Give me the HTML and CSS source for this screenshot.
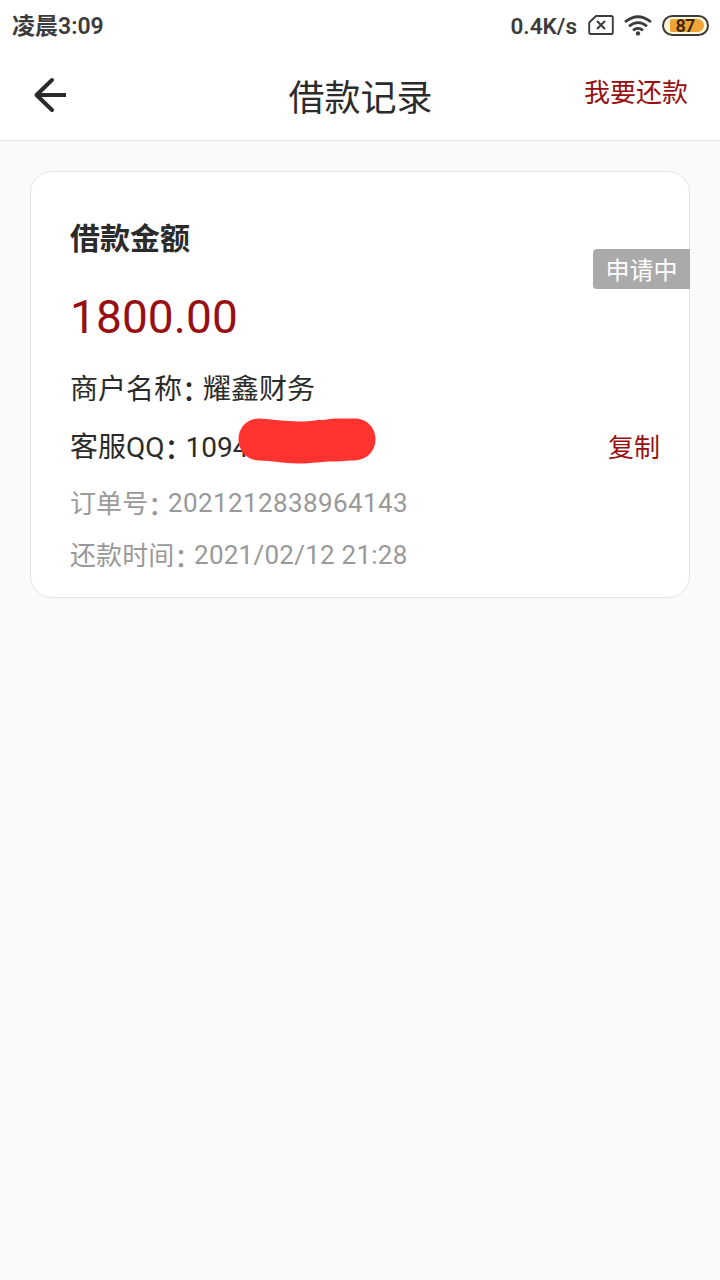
FILE: index.html
```html
<!DOCTYPE html>
<html lang="zh-CN">
<head>
    <meta charset="UTF-8" />
    <title>借款记录</title>
    <link rel="stylesheet" href="styles.css">
</head>
<body>

<div class="status-bar">
    <span class="time">凌晨3:09</span>
    <div class="status-icons">
        <span class="speed">0.4K/s</span>
        <!-- no sim -->
        <svg class="sim" width="26" height="20" viewBox="0 0 26 20" fill="none" stroke="#3c3c3c">
            <path d="M8 1H23.2Q24.8 1 24.8 2.6V17.4Q24.8 19 23.2 19H2.8Q1.2 19 1.2 17.4V7.5Z" stroke-width="1.9" stroke-linejoin="round" />
            <path d="M9 6L17 14M17 6L9 14" stroke-width="2" />
        </svg>
        <svg class="wifi" width="28" height="21" viewBox="0 0 28 21" fill="none" stroke="#3c3c3c" stroke-width="2.7">
            <path d="M1 7Q14 -3.5 27 7" />
            <path d="M5 11.3Q14 3.8 23 11.3" />
            <path d="M9 15.4Q14 11.2 19 15.4" />
            <circle cx="14" cy="18.4" r="2.2" fill="#3c3c3c" stroke="none" />
        </svg>
        <div class="battery"><div class="battery-level">87</div></div>
    </div>
</div>

<div class="header">
    <svg class="back" width="34" height="36" viewBox="0 0 34 36" fill="none" stroke="#2b2b2b" stroke-width="4">
        <path d="M19 3L3.5 18L19 33" stroke-linecap="round" stroke-linejoin="round" />
        <path d="M4 18H33" />
    </svg>
    <h1 class="title">借款记录</h1>
    <a class="repay">我要还款</a>
</div>

<div class="card">
    <div class="tag">申请中</div>
    <h2 class="card-title">借款金额</h2>
    <div class="amount">1800.00</div>
    <div class="row merchant">商户名称<span class="colon">：</span>耀鑫财务</div>
    <div class="row service">
        <div class="qq">客服QQ<span class="colon">：</span>1094
            <svg class="mask" width="138" height="46" viewBox="0 0 138 46">
                <path d="M21 .5C34 1 47 3.5 61 3.5C75 3.5 76 2 82 2C90 2 90 .5 100 .5H117C129 .5 137.500 10 137.500 21C137.500 33 129 42.500 115 42.500C107 42.500 105 43.500 95 43.500C82 43.500 76 45.500 60 45.500C44 45 34 43 21 42.500C9 42 .5 33 .5 21.500C.5 9.500 9 .5 21 .5Z" fill="#ff3330" />
            </svg>
        </div>
        <a class="copy">复制</a>
    </div>
    <div class="row small order">订单号<span class="colon">：</span><span class="number">2021212838964143</span></div>
    <div class="row small">还款时间<span class="colon">：</span><span class="date">2021/02/12 21:28</span></div>
</div>

</body>
</html>
```
FILE: styles.css
```css
* {
    box-sizing: border-box;
}

body {
    margin: 0;
    min-height: 1280px;
    background: #fafafa;
    color: #2b2b2b;
    font-family: Roboto, "Noto Sans CJK SC", sans-serif;
}

.status-bar {
    display: flex;
    justify-content: space-between;
    align-items: center;
    height: 50px;
    padding: 0 11px 0 12px;
    background: #fff;
    color: #3c3c3c;
    font-weight: 600;
}

.time {
    padding-top: 3px;
    font-size: 23px;
    line-height: 50px;
}

.status-icons {
    display: flex;
    align-items: center;
}

.speed {
    padding-top: 2px;
    font-size: 22.5px;
    line-height: 46px;
}

.sim {
    margin-left: 11px;
}

.wifi {
    margin-left: 10px;
}

.battery {
    width: 47px;
    height: 21px;
    margin-left: 10px;
    padding: 2px 3px 2px 6px;
    border: 2px solid #3c3c3c;
    border-radius: 11px;
    background: #fff7dc;
}

.battery-level {
    height: 13px;
    padding-right: 4px;
    border-radius: 2px 7px 7px 2px;
    background: #f0a437;
    color: #3c2505;
    font-size: 18px;
    line-height: 13px;
    letter-spacing: -0.8px;
    text-align: center;
}

.header {
    display: grid;
    grid-template-columns: 150px 1fr 150px;
    align-items: center;
    height: 91px;
    padding: 0 32px 0 33px;
    border-bottom: 1px solid #e3e3e3;
    background: #fff;
}

.title {
    margin: 0;
    padding-top: 8px;
    font-size: 36px;
    font-weight: 400;
    line-height: 52px;
    text-align: center;
}

.repay {
    padding-bottom: 10px;
    color: #970f10;
    font-size: 26px;
    text-align: right;
}

.card {
    position: relative;
    height: 427px;
    margin: 30px 30px 0;
    padding: 46px 29px 0 39px;
    border: 1px solid #e5e5e5;
    border-radius: 22px;
    background: #fff;
}

.tag {
    position: absolute;
    top: 77px;
    right: -1px;
    width: 97px;
    height: 40px;
    border-radius: 4px 0 0 4px;
    background: #aaa;
    color: #fff;
    font-size: 24px;
    line-height: 44px;
    text-align: center;
}

.card-title {
    margin: 0;
    font-size: 30px;
    font-weight: 600;
    line-height: 42px;
}

.amount {
    margin-top: 25px;
    color: #970f10;
    font-size: 46px;
    line-height: 64px;
    letter-spacing: 0.1px;
}

.row {
    display: flex;
    font-size: 28px;
    line-height: 40px;
}

/* half-width colon with a small gap, set a little low */
.colon {
    position: relative;
    top: 2px;
    margin-right: 0.25em;
    font-weight: 500;
    font-feature-settings: "halt";
}

.merchant {
    margin-top: 21px;
}

.service {
    justify-content: space-between;
    margin-top: 18px;
}

.qq {
    position: relative;
}

/* hides the rest of the number */
.mask {
    position: absolute;
    top: -10px;
    left: 168px;
}

.copy {
    color: #970f10;
    font-size: 26px;
}

.small {
    margin-top: 16px;
    color: #999;
    font-size: 26px;
    line-height: 36px;
    letter-spacing: 0.1px;
}

.order {
    margin-top: 18px;
}

.number {
    margin-top: -1px;
    letter-spacing: 0.4px;
}

.date {
    margin-top: -1px;
    letter-spacing: 0.25px;
}
```
